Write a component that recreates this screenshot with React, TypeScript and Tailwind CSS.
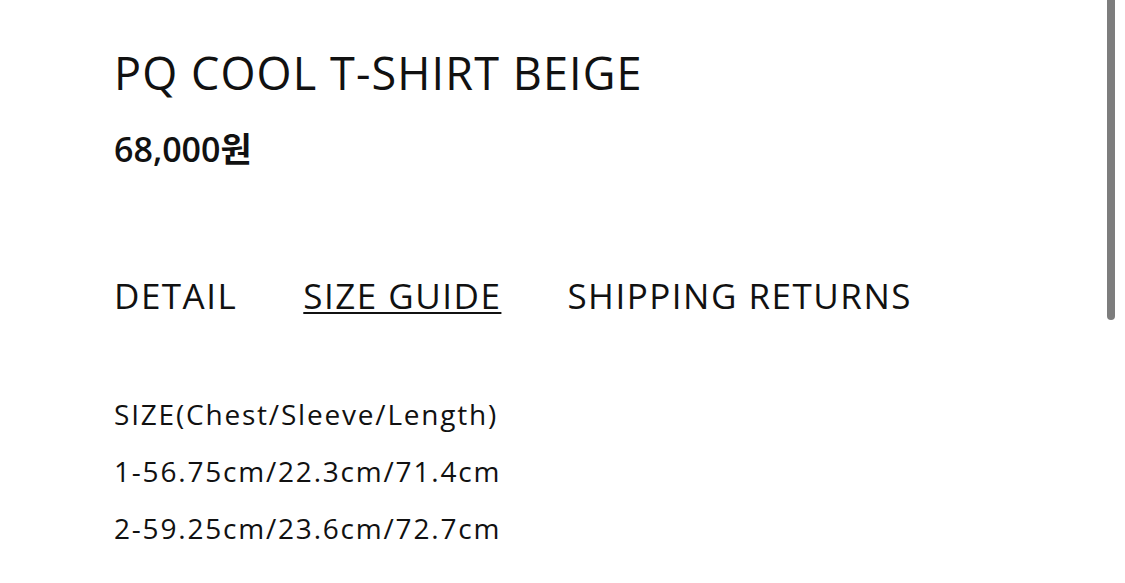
import React from "react";

const tabs = [
  { label: "DETAIL", active: false },
  { label: "SIZE GUIDE", active: true },
  { label: "SHIPPING RETURNS", active: false },
];

const sizes = [
  "SIZE(Chest/Sleeve/Length)",
  "1-56.75cm/22.3cm/71.4cm",
  "2-59.25cm/23.6cm/72.7cm",
];

export default function App() {
  return (
    <div className="relative w-[1125px] h-[583px] overflow-hidden bg-white text-[#111] font-['Open_Sans','Noto_Sans_CJK_KR',sans-serif]">
      <div className="pl-[114px] pt-[48px]">
        <h1 className="text-[45px] leading-[50px] font-normal tracking-[1.1px]">PQ COOL T-SHIRT BEIGE</h1>
        <p className="mt-[31px] text-[34px] leading-[40px] font-semibold">68,000원</p>

        <nav className="mt-[107px] flex gap-[66px] text-[35px] leading-[40px] font-medium tracking-[1.5px]">
          {tabs.map((t) => (
            <span
              key={t.label}
              className={t.active ? "underline decoration-2 underline-offset-[3px]" : ""}
            >
              {t.label}
            </span>
          ))}
        </nav>

        <div className="mt-[70px] flex flex-col text-[28px] leading-[57px] tracking-[1.8px]">
          {sizes.map((s) => (
            <span key={s}>{s}</span>
          ))}
        </div>
      </div>

      {/* scrollbar */}
      <div className="absolute right-[10px] top-0 w-[8px] h-[320px] rounded-b-full bg-[#7d7d7d]" />
    </div>
  );
}
